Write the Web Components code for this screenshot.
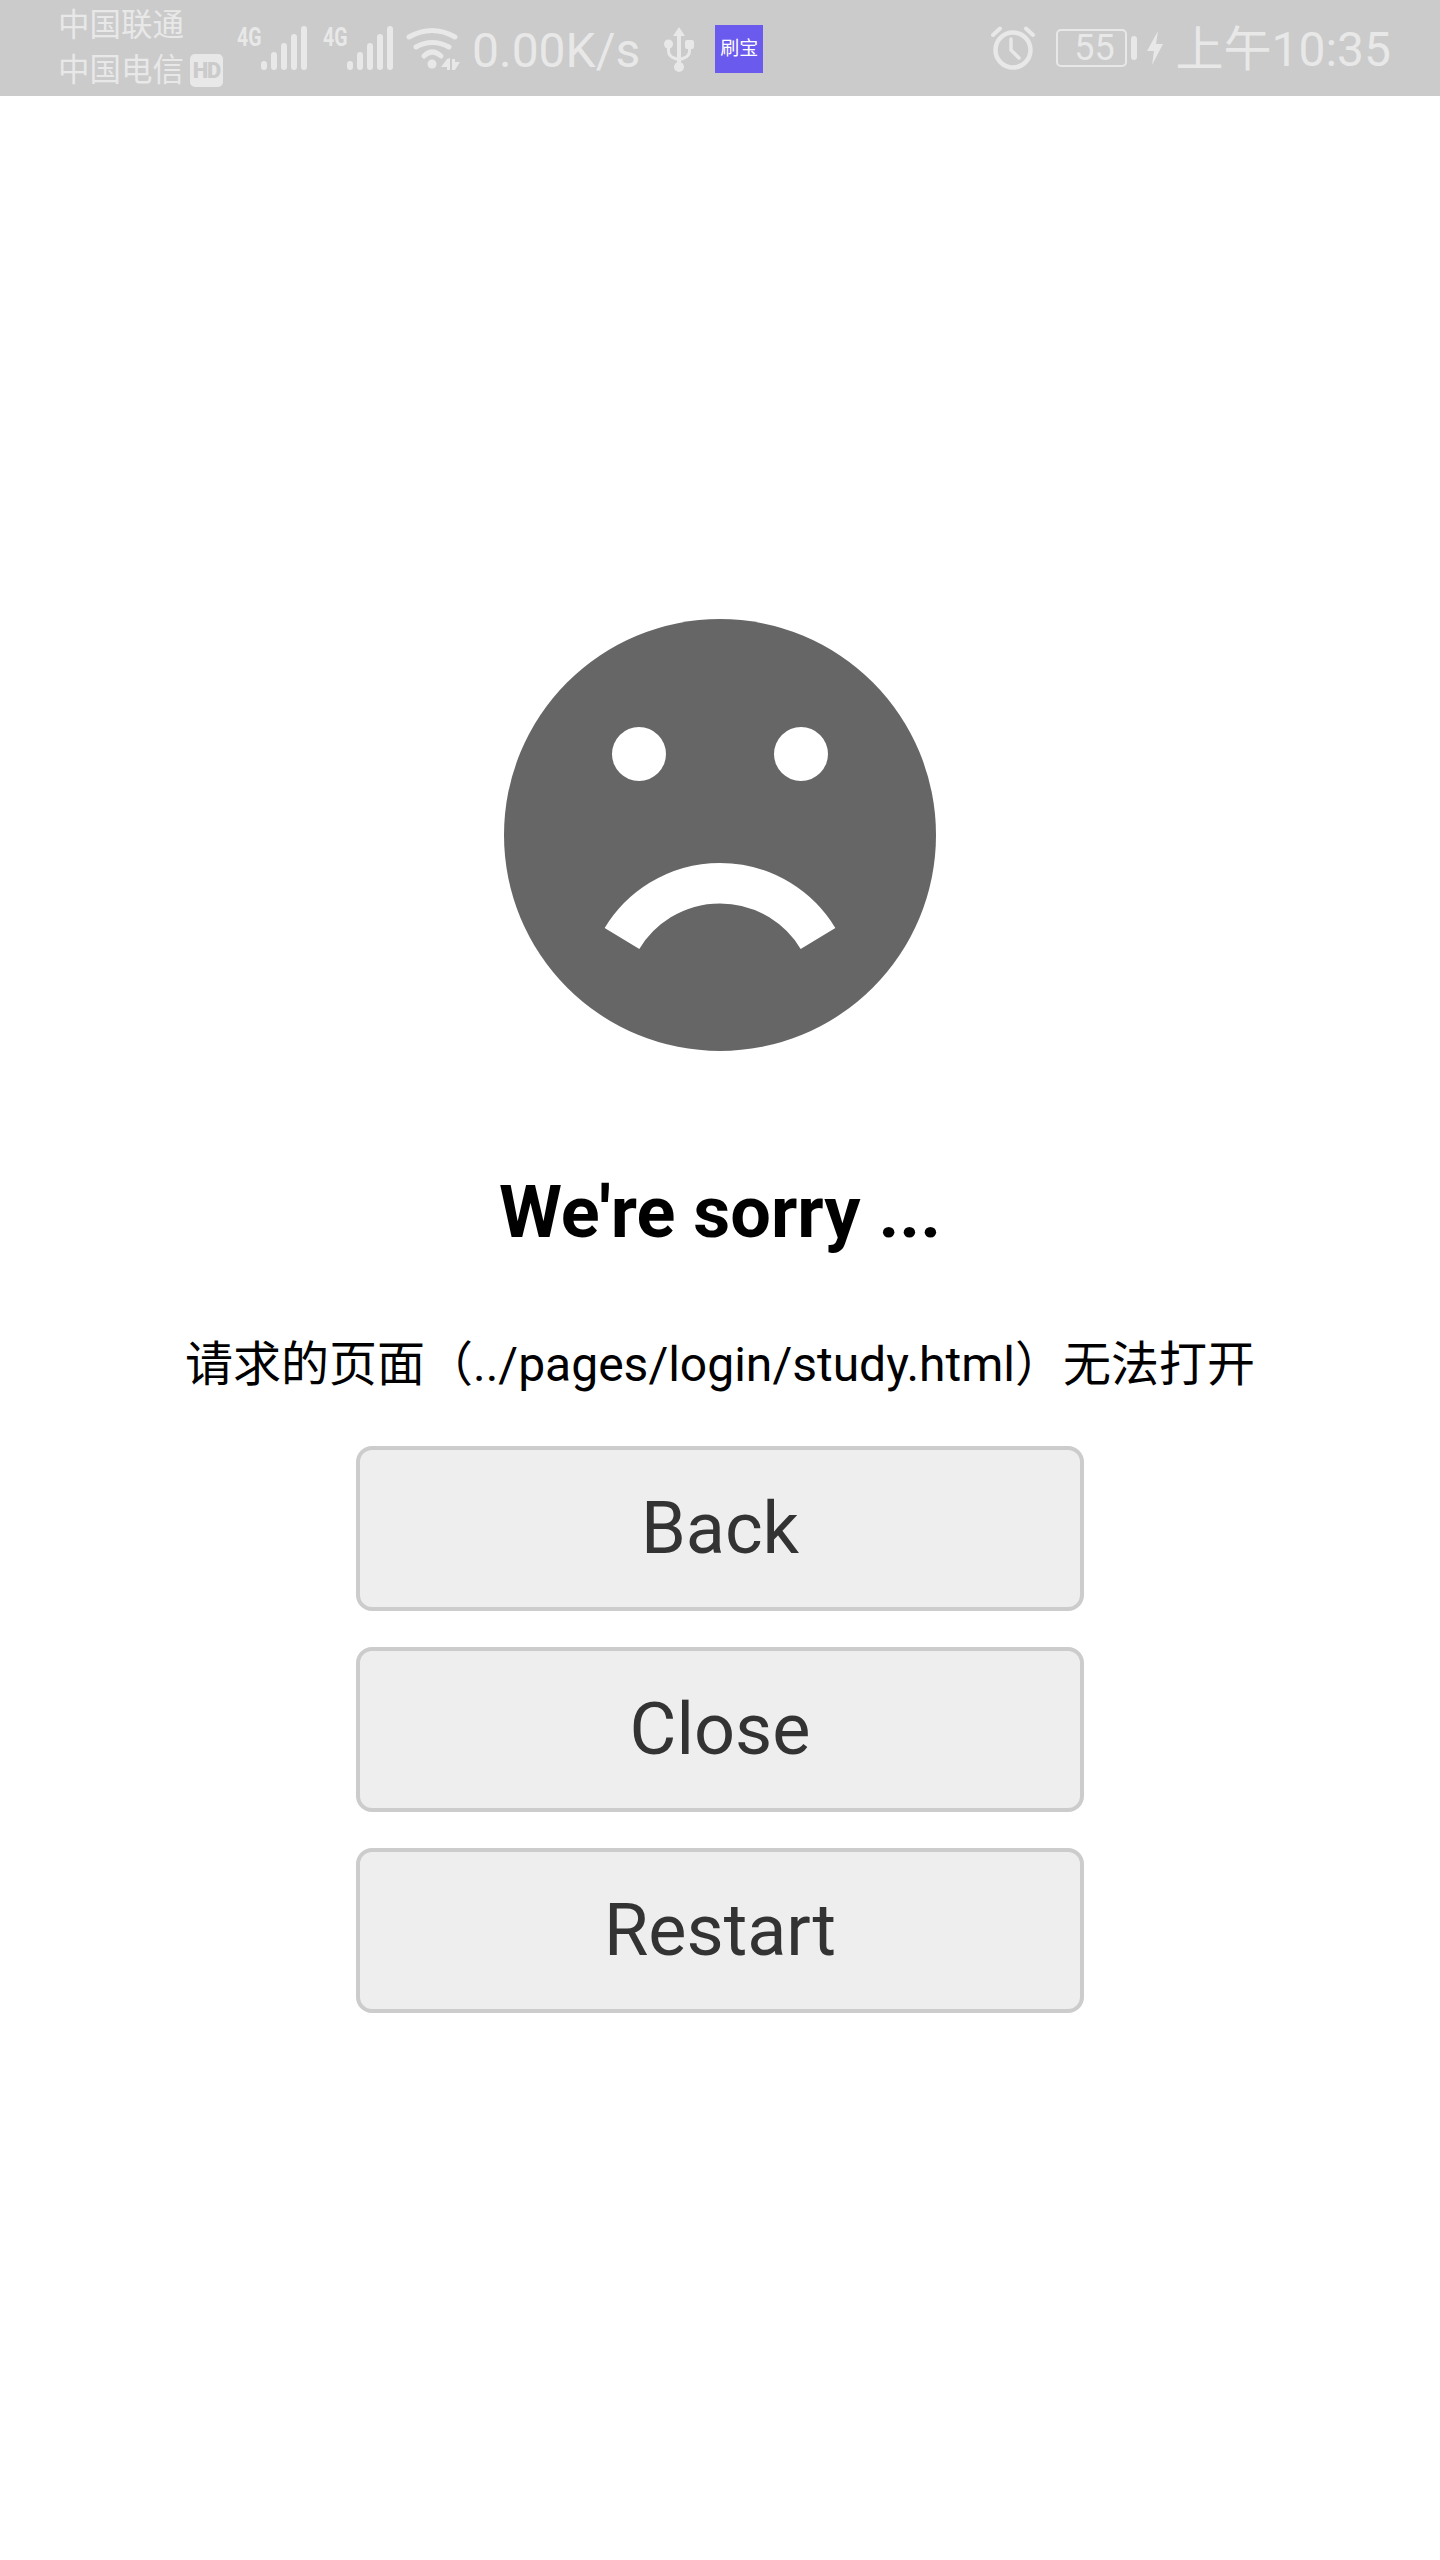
<!DOCTYPE html>
<html lang="zh">
<head>
<meta charset="utf-8">
<title>We're sorry</title>
<style>
  html, body { margin: 0; padding: 0; background: #fff; }
  body { font-family: Roboto, "Noto Sans CJK SC", sans-serif; }
</style>
</head>
<body>
<status-bar></status-bar>
<error-page>
  <span slot="title">We're sorry ...</span>
  <span slot="message">请求的页面（../pages/login/study.html）无法打开</span>
  <action-button>Back</action-button>
  <action-button>Close</action-button>
  <action-button>Restart</action-button>
</error-page>

<script>
const signalIcon = `
  <span class="net">4G</span>
  <svg width="46" height="44" viewBox="0 0 46 44" fill="#e8e8e8">
    <rect x="0" y="35" width="6" height="9" rx="3"/>
    <rect x="10" y="26" width="6" height="18" rx="3"/>
    <rect x="20" y="17" width="6" height="27" rx="3"/>
    <rect x="30" y="8" width="6" height="36" rx="3"/>
    <rect x="40" y="0" width="6" height="44" rx="3"/>
  </svg>`;

class StatusBar extends HTMLElement {
  constructor() {
    super();
    this.attachShadow({ mode: 'open' });
    this.shadowRoot.innerHTML = `
      <style>
        :host {
          display: flex;
          justify-content: space-between;
          align-items: center;
          height: 96px;
          padding: 0 49px 0 58px;
          background: #cbcbcb;
          color: #e8e8e8;
          font-family: Roboto, "Noto Sans CJK SC", sans-serif;
          box-sizing: border-box;
        }
        .group { display: flex; align-items: center; }
        .carrier { font-size: 31.5px; line-height: 45px; width: 132px; }
        .carrier div { display: flex; align-items: center; white-space: nowrap; }
        .hd {
          width: 33px; height: 33px; margin-left: 6px; border-radius: 5px;
          background: #e8e8e8; color: #cbcbcb;
          font-size: 22px; font-weight: 900; line-height: 33px; text-align: center;
          flex: none; letter-spacing: -1px;
        }
        .sig { margin-left: 47px; display: flex; }
        .sig + .sig { margin-left: 16px; }
        .net {
          width: 24px; height: 44px; flex: none;
          font-size: 26px; font-weight: 700; line-height: 23px;
          transform: scaleX(.75); transform-origin: left top;
        }
        svg { display: block; flex: none; }
        .speed { font-size: 48px; line-height: 48px; margin: 5px 0 0 12px; }
        .usb { margin: 3px 0 0 24px; }
        .brand {
          width: 48px; height: 48px; margin: 2px 0 0 21px;
          background: #6a5aee; color: #fff;
          font-size: 19px; line-height: 48px; text-align: center; white-space: nowrap;
        }
        .battery {
          box-sizing: border-box; width: 71px; height: 38px; margin-left: 21px;
          border: 2px solid #e8e8e8; border-radius: 5px;
          font-size: 36px; line-height: 34px; text-align: center;
          padding-left: 5px;
        }
        .nub { width: 6px; height: 24px; margin-left: 4px; border-radius: 3px; background: #e8e8e8; }
        .bolt { margin-left: 10px; }
        .clock { font-size: 48px; line-height: 48px; margin: 4px 0 0 12px; white-space: nowrap; }
      </style>
      <div class="group">
        <div class="carrier">
          <div>中国联通</div>
          <div>中国电信<span class="hd">HD</span></div>
        </div>
        <span class="sig">${signalIcon}</span>
        <span class="sig">${signalIcon}</span>
        <svg style="margin-left:13px" width="54" height="44" viewBox="0 0 54 44" fill="none" stroke="#e8e8e8" stroke-width="5" stroke-linecap="round">
          <path d="M3 11 Q26 -2 49 11"/>
          <path d="M10 21 Q26 12 43 21"/>
          <path d="M18 30 Q26 22 35 30"/>
          <circle cx="26" cy="38" r="4.500" fill="#e8e8e8" stroke="none"/>
          <path d="M44 32 V44 H41 V41 H35 L41 33 Z M46 33 H49 V36 H54 L49 44 H46 Z" fill="#e8e8e8" stroke="none"/>
        </svg>
        <span class="speed">0.00K/s</span>
        <svg class="usb" width="30" height="46" viewBox="0 0 30 46" fill="#e8e8e8">
          <path d="M15 0 L21 9 L17 9 L17 36 L13 36 L13 9 L9 9 Z"/>
          <circle cx="15" cy="40" r="5"/>
          <circle cx="4.500" cy="17" r="4.500"/>
          <rect x="21" y="13" width="9" height="9" rx="2"/>
          <path d="M4.500 20 V24 Q4.500 29 10 31 L15 33 L20 31 Q25.500 29 25.500 24 V20" fill="none" stroke="#e8e8e8" stroke-width="3"/>
        </svg>
        <span class="brand">刷宝</span>
      </div>
      <div class="group">
        <svg width="44" height="44" viewBox="0 0 44 44" fill="none" stroke="#e8e8e8">
          <circle cx="22" cy="24" r="17.500" stroke-width="4.500"/>
          <path d="M20 13 V24 L28 32" stroke-width="3.500" stroke-linecap="round" stroke-linejoin="round"/>
          <path d="M2 9 L9 2.500 M42 9 L35 2.500" stroke-width="4" stroke-linecap="round"/>
        </svg>
        <span class="battery">55</span>
        <span class="nub"></span>
        <svg class="bolt" width="16" height="34" viewBox="0 0 16 34" fill="#e8e8e8">
          <path d="M11 0 L0 20 L7 20 L5 34 L16 13 L9 13 Z"/>
        </svg>
        <span class="clock">上午10:35</span>
      </div>
    `;
  }
}

class SadFace extends HTMLElement {
  constructor() {
    super();
    this.attachShadow({ mode: 'open' });
    this.shadowRoot.innerHTML = `
      <style>
        :host { display: block; width: 432px; height: 432px; }
        svg { display: block; }
      </style>
      <svg width="432" height="432" viewBox="0 0 432 432">
        <circle cx="216" cy="216" r="216" fill="#666"/>
        <circle cx="135" cy="135" r="27" fill="#fff"/>
        <circle cx="297" cy="135" r="27" fill="#fff"/>
        <path d="M118 319.500 A114.500 114.500 0 0 1 314 319.500" fill="none" stroke="#fff" stroke-width="40.500"/>
      </svg>
    `;
  }
}

class ActionButton extends HTMLElement {
  constructor() {
    super();
    this.attachShadow({ mode: 'open' });
    this.shadowRoot.innerHTML = `
      <style>
        :host {
          display: flex;
          justify-content: center;
          align-items: center;
          box-sizing: border-box;
          width: 728px;
          height: 165px;
          border: 4px solid #ccc;
          border-radius: 16px;
          background: #eee;
          color: #333;
          font-size: 72px;
          cursor: pointer;
        }
      </style>
      <slot></slot>
    `;
  }
}

class ErrorPage extends HTMLElement {
  constructor() {
    super();
    this.attachShadow({ mode: 'open' });
    this.shadowRoot.innerHTML = `
      <style>
        :host {
          display: flex;
          flex-direction: column;
          align-items: center;
          padding-top: 523px;
          font-family: Roboto, "Noto Sans CJK SC", sans-serif;
          color: #000;
        }
        h1 { margin: 120px 0 0; font-size: 72px; line-height: 84px; font-weight: 700; }
        p { margin: 75px 0 0; font-size: 48px; line-height: 70px; }
        .actions { display: flex; flex-direction: column; gap: 36px; margin-top: 46px; }
      </style>
      <sad-face></sad-face>
      <h1><slot name="title"></slot></h1>
      <p><slot name="message"></slot></p>
      <div class="actions"><slot></slot></div>
    `;
  }
}

customElements.define('status-bar', StatusBar);
customElements.define('sad-face', SadFace);
customElements.define('action-button', ActionButton);
customElements.define('error-page', ErrorPage);
</script>
</body>
</html>
